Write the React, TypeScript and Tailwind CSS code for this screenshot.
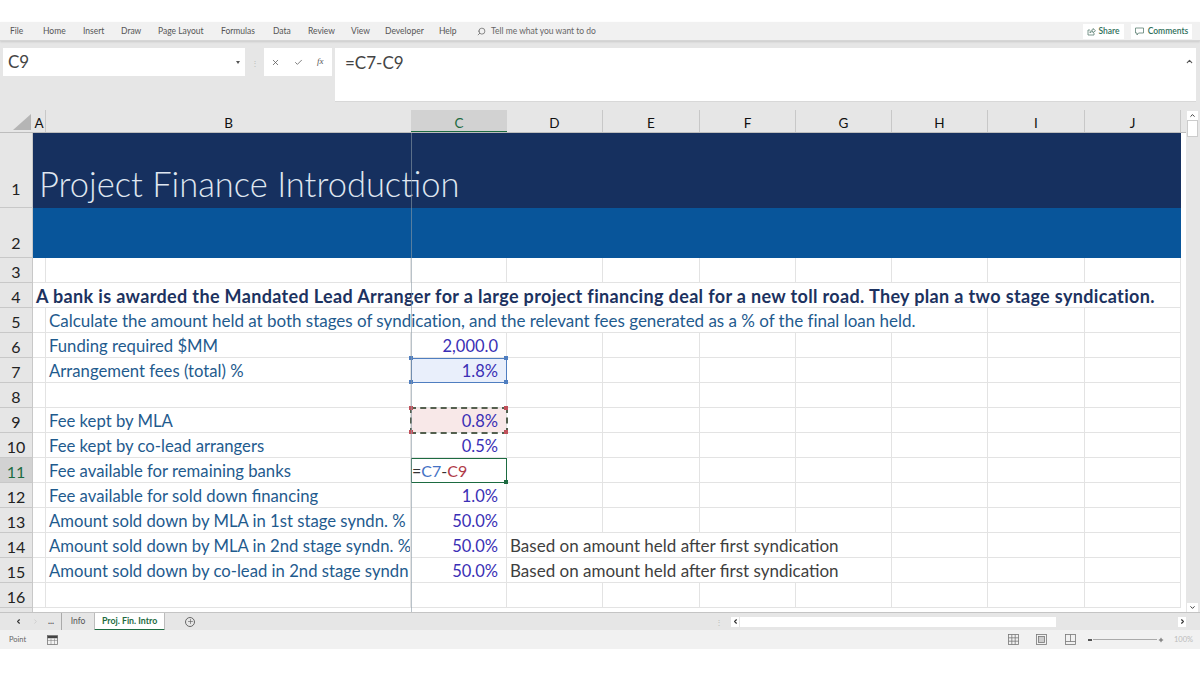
import React from "react";
import { Search, X, Check, ChevronUp, ChevronDown, ChevronLeft, ChevronRight, Plus } from "lucide-react";

const tabs: [string, string][] = [["File","w-[43px] pl-[10px]"],["Home","w-[40px]"],["Insert","w-[38px]"],["Draw","w-[37px]"],["Page Layout","w-[63px]"],["Formulas","w-[52px]"],["Data","w-[35px]"],["Review","w-[43px]"],["View","w-[34px]"],["Developer","w-[54px]"],["Help","w-[38px]"]];

function Cell({ children, cls = "" }: { children?: React.ReactNode; cls?: string }) {
  return <div className={"border-r border-b border-[#e3e3e3] box-border relative whitespace-nowrap " + cls}>{children}</div>;
}

function Row({ n, h = "h-[25px]", a, b, c, d, cCls = "", sel = false }: { n: number; h?: string; a?: React.ReactNode; b?: React.ReactNode; c?: React.ReactNode; d?: React.ReactNode; cCls?: string; sel?: boolean }) {
  return (
    <div className={"flex " + h}>
      <div className={"w-[33px] shrink-0 flex items-center justify-center pt-[3px] border-b border-r border-[#c8c8c8] text-[16px] " + (sel ? "bg-[#d2d2d2] text-[#1d6b41]" : "bg-[#e6e6e6] text-[#222]")}>{n}</div>
      <Cell cls={"w-[13px] shrink-0 flex items-center " + (a ? "z-10" : "")}>{a}</Cell>
      <Cell cls="w-[365px] shrink-0 flex items-center pl-[3px] pt-[3px] overflow-hidden text-[16.7px] text-[#1f5b8e]">{b}</Cell>
      <div className={"w-[96px] shrink-0 box-border border-r border-b border-[#e3e3e3] flex items-center justify-end pr-[8px] pt-[2px] text-[16.5px] text-[#3a2fb5] relative " + cCls}>{c}</div>
      <Cell cls={"w-[96px] shrink-0 flex items-center text-[#3f3f3f] " + (d ? "z-10" : "")}>{d}</Cell>
      <Cell cls="w-[97px] shrink-0" />
      <Cell cls="w-[96px] shrink-0" />
      <Cell cls="w-[96px] shrink-0" />
      <Cell cls="w-[96px] shrink-0" />
      <Cell cls="w-[97px] shrink-0" />
      <Cell cls="w-[96px] shrink-0" />
    </div>
  );
}

const Handles = ({ c }: { c: string }) => (
  <>
    <span className={"absolute w-[4px] h-[4px] -left-[2px] -top-[2px] z-30 " + c} />
    <span className={"absolute w-[4px] h-[4px] -right-[2px] -top-[2px] z-30 " + c} />
    <span className={"absolute w-[4px] h-[4px] -left-[2px] -bottom-[2px] z-30 " + c} />
    <span className={"absolute w-[4px] h-[4px] -right-[2px] -bottom-[2px] z-30 " + c} />
  </>
);

const Note = () => <span className="absolute left-0 top-0 bottom-0 pl-[3px] pt-[2px] pr-[2px] flex items-center bg-white">Based on amount held after first syndication</span>;

export default function App() {
  return (
    <div className="w-[1200px] h-[675px] bg-white overflow-hidden font-['Lato','Open_Sans',sans-serif] text-[#222] pt-[22px]">
      <div className="h-[19px] bg-[#f1f1f1] flex items-center text-[8.5px] text-[#555] border-b border-[#d6d6d6] shadow-[0_1px_2px_rgba(0,0,0,0.12)] relative z-20">
        {tabs.map(([t, w]) => <span key={t} className={"shrink-0 " + w}>{t}</span>)}
        <Search size={9} className="mr-[5px] -scale-x-100 text-[#666]" />
        <span className="text-[#666]">Tell me what you want to do</span>
        <div className="ml-auto flex gap-[7px] mr-[8px] text-[#2f6f5a] font-semibold">
          <span className="w-[41px] h-[15px] bg-white flex items-center justify-center gap-[2px]">
            <svg width="9" height="9" viewBox="0 0 9 9" fill="none" stroke="#5b7f72" strokeWidth="0.8"><path d="M3 3H1v5h6V6" /><path d="M3 6c0-2 1-3 3-3V1.5L8.5 3.7 6 5.8V4.5C4.5 4.5 3.5 5 3 6z" /></svg>
            Share
          </span>
          <span className="w-[61px] h-[15px] bg-white flex items-center justify-center gap-[4px]">
            <svg width="9" height="9" viewBox="0 0 9 9" fill="none" stroke="#5b7f72" strokeWidth="0.8"><path d="M.5 1h8v5H3.5L2 8V6H.5z" /></svg>
            Comments
          </span>
        </div>
      </div>
      <div className="h-[69px] bg-[#e6e6e6] flex items-start pt-[7px] pl-[3px]">
        <div className="w-[242px] h-[28px] bg-white flex items-center justify-between pl-[5px] pr-[4px] text-[17px] text-[#444]">
          <span>C9</span><span className="w-0 h-0 border-x-[2px] border-t-[3px] border-x-transparent border-t-[#555] mr-[1px]" />
        </div>
        <div className="w-[19px] flex justify-center pt-[9px] text-[8px] text-[#bbb]">⋮</div>
        <div className="w-[68px] h-[28px] bg-white flex items-center pl-[7px] gap-[14px] text-[#555]">
          <X size={9} /><Check size={9} /><span className="text-[9px] italic font-['Liberation_Serif',serif]">fx</span>
        </div>
        <div className="w-[861px] h-[54px] ml-[3px] bg-white border-b border-[#d8d8d8] flex items-start pt-[2px] pl-[10px] text-[17px] text-[#444] relative">
          =C7-C9
          <ChevronUp size={9} className="absolute right-[2px] top-[9px] text-[#555]" strokeWidth={3} />
        </div>
      </div>
      <div className="flex relative">
        <div className="w-[1186px] shrink-0 relative">
          <div className="flex h-[23px] bg-[#e6e6e6] text-[13.5px] text-[#111] border-b border-[#bdbdbd]">
            <div className="w-[33px] shrink-0 relative"><span className="absolute right-[2px] bottom-[2px] w-0 h-0 border-l-[18px] border-b-[16px] border-l-transparent border-b-[#b5b5b5]" /></div>
            <div className="w-[13px] shrink-0 flex justify-center pt-[3px] border-r border-[#c8c8c8]">A</div>
            <div className="w-[365px] shrink-0 flex justify-center pt-[3px]">B</div>
            <div className="w-[96px] shrink-0 flex justify-center pt-[3px] bg-[#d2d2d2] text-[#1d6b41] border-b border-[#1d6b41]">C</div>
            {["D","E","F","G","H","I","J"].map((l, i) => (
              <div key={l} className={(i === 1 || i === 5 ? "w-[97px]" : "w-[96px]") + " shrink-0 flex justify-center pt-[3px] border-r border-[#c8c8c8]"}>{l}</div>
            ))}
          </div>
          <div className="w-[1181px] text-[17px]">
            <div className="flex h-[75px]">
              <div className="w-[33px] shrink-0 bg-[#e6e6e6] border-b border-r border-[#c8c8c8] flex items-end justify-center pb-[6px] text-[16px] text-[#222]">1</div>
              <div className="grow bg-[#16305f] flex items-end pl-[6px] pb-[2px]">
                <span className="text-[34.5px] leading-[44px] text-[#dfe6f0] font-light whitespace-nowrap">Project Finance Introduction</span>
              </div>
            </div>
            <div className="flex h-[50px]">
              <div className="w-[33px] shrink-0 bg-[#e6e6e6] border-b border-r border-[#c8c8c8] flex items-end justify-center pb-[2px] text-[16px] text-[#222]">2</div>
              <div className="grow bg-[#08559a]" />
            </div>
            <Row n={3} />
            <Row n={4} a={<span className="absolute left-[3px] top-0 bottom-0 pt-[2px] flex items-center pr-[2px] bg-white font-bold text-[#1c3260] text-[18px] tracking-[0.35px]">A bank is awarded the Mandated Lead Arranger for a large project financing deal for a new toll road. They plan a two stage syndication.</span>} />
            <Row n={5} a={<span className="absolute left-[15px] top-0 bottom-0 pl-px pt-[2px] flex items-center pr-[2px] bg-white text-[17px] tracking-[-0.02px] text-[#1f5b8e]">Calculate the amount held at both stages of syndication, and the relevant fees generated as a % of the final loan held.</span>} />
            <Row n={6} b="Funding required $MM" c="2,000.0" />
            <Row n={7} b="Arrangement fees (total) %" c={<>1.8%<Handles c="bg-[#4f7ec0]" /></>} cCls="bg-[#e9effb] outline outline-1 -outline-offset-1 outline-[#4f7ec0] z-20" />
            <Row n={8} />
            <Row n={9} b="Fee kept by MLA" c={<>0.8%<Handles c="bg-[#c0505a]" /></>} cCls="bg-[#f8e8e8] outline-2 -outline-offset-1 outline-dashed outline-[#54604f] z-20" />
            <Row n={10} b="Fee kept by co-lead arrangers" c="0.5%" />
            <Row n={11} sel b="Fee available for remaining banks" cCls="outline outline-[1.5px] -outline-offset-1 outline-[#1d6b41] !justify-start !pl-[1px] z-20" c={<span className="text-[16px]"><span className="text-[#333]">=</span><span className="text-[#4472c4]">C7</span><span className="text-[#333]">-</span><span className="text-[#b03a48]">C9</span><span className="absolute w-[4px] h-[4px] -right-[2px] -bottom-[2px] bg-[#1d6b41]" /></span>} />
            <Row n={12} b="Fee available for sold down financing" c="1.0%" />
            <Row n={13} b="Amount sold down by MLA in 1st stage syndn. %" c="50.0%" />
            <Row n={14} b="Amount sold down by MLA in 2nd stage syndn. %" c="50.0%" d={<Note />} />
            <Row n={15} b="Amount sold down by co-lead in 2nd stage syndn" c="50.0%" d={<Note />} />
            <Row n={16} />
            <div className="h-[4px] flex"><div className="w-[33px] bg-[#e6e6e6] border-r border-[#c8c8c8]" /></div>
          </div>
          <div className="absolute left-[411px] top-[23px] bottom-0 w-px bg-[#8a9aa5]/60 z-20" />
        </div>
        <div className="w-[14px] h-[502px] bg-[#e6e6e6] pl-px pr-[2px] flex flex-col">
          <div className="h-[9px] mt-px bg-white flex items-center justify-center"><ChevronUp size={7} strokeWidth={3} /></div>
          <div className="h-[17px] bg-white border border-[#ccc]" />
          <div className="h-[9px] mt-auto bg-white flex items-center justify-center"><ChevronDown size={7} strokeWidth={3} /></div>
        </div>
      </div>
      <div className="h-[18px] bg-[#e6e6e6] border-t border-[#c4c4c4] flex items-center text-[8.5px] text-[#555] relative">
        <ChevronLeft size={7} strokeWidth={4} className="ml-[15px] text-[#333]" />
        <ChevronRight size={7} strokeWidth={3} className="ml-[10px] text-[#ccc]" />
        <span className="ml-[9px] font-bold">...</span>
        <span className="ml-[7px] w-[33px] h-[17px] border-l border-[#aaa] flex items-center justify-center">Info</span>
        <span className="w-[71px] h-[18px] bg-white border-b-2 border-x border-x-[#bbb] border-b-[#1d6b41] flex items-center justify-center text-[8.8px] font-bold text-[#1d6b41]">Proj. Fin. Intro</span>
        <span className="ml-[20px] w-[10px] h-[10px] rounded-full border border-[#666] flex items-center justify-center"><Plus size={7} /></span>
        <div className="ml-[520px] text-[#bbb] text-[8px]">⋮</div>
        <div className="ml-[8px] w-[8px] h-[10px] bg-white flex items-center justify-center"><ChevronLeft size={7} strokeWidth={4} className="text-[#333]" /></div>
        <div className="ml-px w-[316px] h-[10px] bg-white" />
        <div className="w-[122px]" />
        <div className="w-[8px] h-[10px] bg-white flex items-center justify-center"><ChevronRight size={7} strokeWidth={4} className="text-[#333]" /></div>
      </div>
      <div className="h-[19px] bg-[#f1f1f1] flex items-center text-[7.5px] text-[#666] relative">
        <span className="ml-[9px]">Point</span>
        <svg width="11" height="11" viewBox="0 0 11 11" className="ml-[21px]" fill="none" stroke="#777" strokeWidth="0.8"><rect x="0.5" y="1.5" width="10" height="9" /><path d="M0.5 3h10" stroke="#444" strokeWidth="2.4" /><path d="M0.5 6.5h10M4 4.5v6M7.5 4.5v6" strokeWidth="0.5" /></svg>
        <div className="ml-auto flex items-center text-[#666]">
          <svg width="11" height="11" viewBox="0 0 11 11" fill="none" stroke="#777" strokeWidth="0.8"><rect x="0.5" y="0.5" width="10" height="10" /><path d="M0.5 3.8h10M0.5 7.2h10M3.8.5v10M7.2.5v10" /></svg>
          <svg width="11" height="11" viewBox="0 0 11 11" className="ml-[17px]" fill="none" stroke="#777" strokeWidth="0.8"><rect x="0.5" y="0.5" width="10" height="10" /><rect x="2.5" y="2.5" width="6" height="6" fill="#ccc" /></svg>
          <svg width="11" height="11" viewBox="0 0 11 11" className="ml-[18px]" fill="none" stroke="#777" strokeWidth="0.8"><rect x="0.5" y="0.5" width="10" height="10" /><path d="M5.5.5v7M0.5 7.5h10" /></svg>
          <span className="w-[4px] h-[2px] bg-[#555] ml-[12px]" />
          <div className="w-[64px] h-px bg-[#aaa] mx-[1px]" />
          <Plus size={6} strokeWidth={4} />
          <span className="ml-[10px] mr-[7px] text-[#bbb]">100%</span>
        </div>
      </div>
    </div>
  );
}
